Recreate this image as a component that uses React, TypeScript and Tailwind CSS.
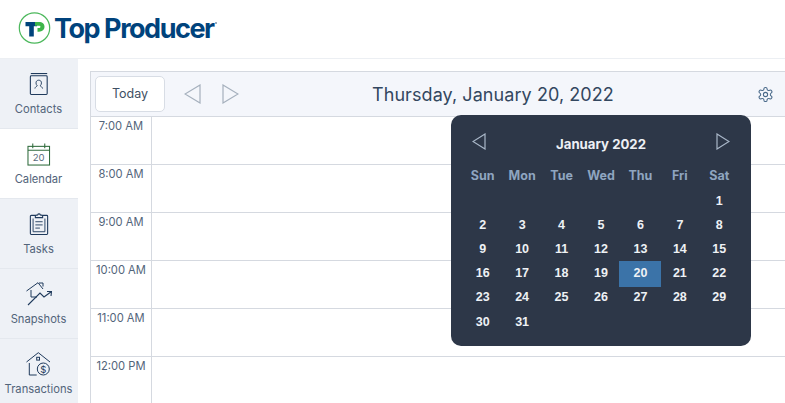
import type { ReactNode } from "react";

const hours = ["7:00 AM", "8:00 AM", "9:00 AM", "10:00 AM", "11:00 AM", "12:00 PM"];
const weekDays = ["Sun", "Mon", "Tue", "Wed", "Thu", "Fri", "Sat"];
const blanks = [0, 1, 2, 3, 4, 5];
const days = Array.from({ length: 31 }, (_, i) => i + 1);

function Logo() {
  return (
    <div className="flex items-center">
      <svg width="33" height="33" viewBox="0 0 33 33" fill="none">
        <circle cx="16.500" cy="16" r="15.200" stroke="#4cb85c" strokeWidth="1.200" />
        <path d="M7.500 10h11.500v4.200h-3.200v10.300h-4.600V14.200H7.500z" fill="#00437c" />
        <path d="M17 10h4c3.400 0 5.500 1.900 5.500 4.800 0 2.900-2.200 4.900-5.500 4.900h-1.500V16h1.400c1 0 1.500-.4 1.500-1.200s-.5-1-1.500-1H17z" fill="#3db54a" />
      </svg>
      <span className="ml-[3px] text-[27px] leading-none font-bold tracking-[-1.450px] text-[#00437c] font-['Inter',sans-serif]">Top Producer</span>
      <span className="mb-[12px] ml-[1px] h-[2px] w-[2px] rounded-full bg-[#7c93ab]" />
    </div>
  );
}

function ContactsIcon() {
  return (
    <svg width="20" height="24" viewBox="0 0 22 26" fill="none" stroke="#1f3a5c" strokeWidth="1.200">
      <path d="M2 1.500h18" />
      <rect x="1.500" y="4" width="18.500" height="20.500" rx="1" />
      <path d="M6.500 18c.3-2 2-2.200 2.600-3-1-1-1.400-2-1.400-3.200 0-1.800 1.200-3 3-3s3 1.200 3 3c0 1.200-.4 2.200-1.400 3.200.6.800 2.300 1 2.600 3" strokeWidth="1" />
    </svg>
  );
}

function CalendarIcon() {
  return (
    <svg width="24" height="23" viewBox="0 0 25 24" fill="none">
      <rect x="1" y="3.500" width="22.500" height="19.500" stroke="#2f6b3c" strokeWidth="1.100" />
      <path d="M1 7.500h22.500M6 .5v5M18.500.5v5" stroke="#2f6b3c" strokeWidth="1.100" />
      <text x="12.200" y="19" textAnchor="middle" fontSize="10" fill="#5c6d80" fontFamily="Inter, sans-serif">20</text>
    </svg>
  );
}

function TasksIcon() {
  return (
    <svg width="20" height="24" viewBox="0 0 22 25" fill="none" stroke="#1f3a5c" strokeWidth="1.200">
      <path d="M7 3H2.500a1 1 0 0 0-1 1v19a1 1 0 0 0 1 1h17a1 1 0 0 0 1-1V4a1 1 0 0 0-1-1H15" />
      <path d="M7 5.500V3l2.500-.5C10 1 12 1 12.500 2.500L15 3v2.500z" />
      <path d="M4.500 6.500v14.500h13V6.500M7 10h8M7 13.500h8M7 17h5" strokeWidth="1" />
    </svg>
  );
}

function SnapshotsIcon() {
  return (
    <svg width="26" height="24" viewBox="0 0 26 24" fill="none" stroke="#1f3a5c" strokeWidth="1">
      <path d="M0.500 9L12 0.700L17 7M13 1h4v3.500" />
      <path d="M5 8v7h6" />
      <path d="M2 23L14 11L18 15L25.500 9.500M21 9.500h4.500L25 14" strokeWidth="1.100" />
    </svg>
  );
}

function TransactionsIcon() {
  return (
    <svg width="25" height="24" viewBox="0 0 25 24" fill="none" stroke="#1f3a5c" strokeWidth="1">
      <path d="M0.500 10L12.300 0.700L24 10" />
      <rect x="10.700" y="5.300" width="2.800" height="2.800" />
      <path d="M3.300 11v12h7.400" />
      <circle cx="17.300" cy="17" r="6" />
      <text x="17.300" y="20.500" textAnchor="middle" fontSize="9.500" fill="#1f3a5c" stroke="none" fontFamily="Inter, sans-serif">$</text>
    </svg>
  );
}

function NavItem({ label, icon, active }: { label: string; icon: ReactNode; active?: boolean }) {
  return (
    <div className={`flex h-[70px] flex-col items-center border-b border-[#e4e8ee] pr-[1px] ${active ? "bg-white" : "bg-[#eef1f6]"}`}>
      <div className="flex h-[37px] items-end justify-center">{icon}</div>
      <span className="mt-[5px] text-[11.200px] leading-[16px] text-[#52647a]">{label}</span>
    </div>
  );
}

function Triangle({ dir, color, w, h }: { dir: "left" | "right"; color: string; w: number; h: number }) {
  return (
    <svg width={w} height={h} viewBox={`0 0 ${w} ${h}`} fill="none" stroke={color} strokeWidth="1.200">
      {dir === "left" ? (
        <path d={`M${w - 1} 1V${h - 1}L1 ${h / 2}z`} />
      ) : (
        <path d={`M1 1V${h - 1}L${w - 1} ${h / 2}z`} />
      )}
    </svg>
  );
}

function Gear() {
  return (
    <svg width="17" height="17" viewBox="0 0 24 24" fill="none" stroke="#4a6a8a" strokeWidth="1.500" strokeLinecap="round" strokeLinejoin="round">
      <path d="M12.220 2h-.44a2 2 0 0 0-2 2v.18a2 2 0 0 1-1 1.730l-.43.250a2 2 0 0 1-2 0l-.150-.080a2 2 0 0 0-2.730.730l-.220.380a2 2 0 0 0 .730 2.730l.150.100a2 2 0 0 1 1 1.720v.510a2 2 0 0 1-1 1.740l-.150.090a2 2 0 0 0-.730 2.730l.220.380a2 2 0 0 0 2.730.730l.150-.080a2 2 0 0 1 2 0l.430.250a2 2 0 0 1 1 1.730V20a2 2 0 0 0 2 2h.44a2 2 0 0 0 2-2v-.180a2 2 0 0 1 1-1.730l.430-.250a2 2 0 0 1 2 0l.150.080a2 2 0 0 0 2.730-.730l.220-.390a2 2 0 0 0-.730-2.730l-.150-.080a2 2 0 0 1-1-1.740v-.500a2 2 0 0 1 1-1.740l.150-.090a2 2 0 0 0 .730-2.730l-.220-.380a2 2 0 0 0-2.730-.730l-.150.080a2 2 0 0 1-2 0l-.430-.250a2 2 0 0 1-1-1.730V4a2 2 0 0 0-2-2z" />
      <circle cx="12" cy="12" r="3" />
    </svg>
  );
}

function DatePicker() {
  return (
    <div className="absolute left-[360px] top-[44px] h-[231px] w-[300px] rounded-[10px] bg-[#2d3748] px-[12px] font-['Liberation_Sans',sans-serif] font-bold">
      <div className="flex h-[52px] items-center justify-between px-[9px]">
        <Triangle dir="left" color="#a9b7c8" w={14} h={17} />
        <span className="mt-[8px] text-[13.200px] text-[#edf0f5] font-['Inter',sans-serif]">January 2022</span>
        <Triangle dir="right" color="#a9b7c8" w={14} h={17} />
      </div>
      <div className="grid grid-cols-7 text-center">
        {weekDays.map((d) => (
          <div key={d} className="h-[22px] text-[12.500px] leading-[18px] text-[#8fa5c0] font-['Inter',sans-serif]">{d}</div>
        ))}
        {blanks.map((b) => (
          <div key={b} className="h-[24.200px]" />
        ))}
        {days.map((d) => (
          <div key={d} className="flex h-[24.200px] items-center justify-center text-[12.500px] text-[#eef1f5]">
            {d === 20 ? <span className="flex h-[26px] w-[42px] shrink-0 items-center justify-center bg-[#3b73a8]">{d}</span> : d}
          </div>
        ))}
      </div>
    </div>
  );
}

export default function App() {
  return (
    <div className="flex h-[403px] w-[785px] flex-col overflow-hidden bg-white font-['Inter',sans-serif]">
      <header className="flex h-[59px] shrink-0 items-center border-b border-[#eceff3] pl-[18px] pb-[1px]">
        <Logo />
      </header>
      <div className="flex min-h-0 flex-1">
        <nav className="w-[78px] shrink-0 bg-[#eef1f6]">
          <NavItem label="Contacts" icon={<ContactsIcon />} />
          <NavItem label="Calendar" icon={<CalendarIcon />} active />
          <NavItem label="Tasks" icon={<TasksIcon />} />
          <NavItem label="Snapshots" icon={<SnapshotsIcon />} />
          <NavItem label="Transactions" icon={<TransactionsIcon />} />
        </nav>
        <main className="relative ml-[12px] mt-[12px] min-w-0 flex-1 border-l border-[#d5d9e0]">
          <div className="relative flex h-[46px] items-center border-y border-[#d5d9e0] bg-[#f4f6fb] pl-[4px]">
            <button className="h-[36px] w-[70px] rounded-[5px] border border-[#d8dde5] bg-white text-[12.500px] text-[#3e4f63]">Today</button>
            <div className="ml-[19px] flex items-center gap-[21px]">
              <Triangle dir="left" color="#a5b0bd" w={17} h={20} />
              <Triangle dir="right" color="#a5b0bd" w={17} h={20} />
            </div>
            <h1 className="ml-[133px] text-[18px] font-normal tracking-[0.07px] text-[#33475f]">Thursday, January 20, 2022</h1>
            <div className="ml-auto pr-[11px]">
              <Gear />
            </div>
          </div>
          {hours.map((h) => (
            <div key={h} className="flex h-[48px] border-b border-[#d5d9e0]">
              <div className="w-[61px] shrink-0 border-r border-[#d5d9e0] pt-[1px] text-center text-[11.200px] leading-[16px] text-[#52647a]">{h}</div>
            </div>
          ))}
          <DatePicker />
        </main>
      </div>
    </div>
  );
}
